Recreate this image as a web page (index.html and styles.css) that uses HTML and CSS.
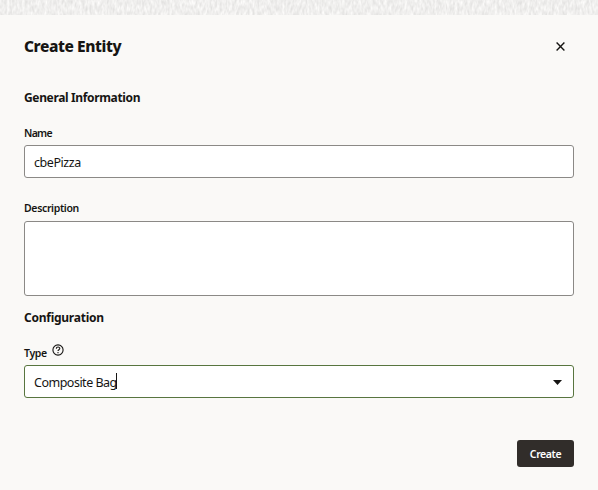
FILE: index.html
```html
<!DOCTYPE html>
<html lang="en">
<head>
<meta charset="utf-8">
<title>Create Entity</title>
<link rel="stylesheet" href="styles.css">
</head>
<body>
<svg class="texture" width="598" height="15" aria-hidden="true">
  <filter id="grain" x="0" y="0" width="100%" height="100%" color-interpolation-filters="sRGB">
    <feTurbulence type="fractalNoise" baseFrequency="0.4 0.17" numOctaves="2" seed="4"/>
    <feColorMatrix values="0.16 0 0 0 0.86  0.16 0 0 0 0.857  0.16 0 0 0 0.852  0 0 0 0 1"/>
  </filter>
  <rect width="598" height="15" filter="url(#grain)"/>
</svg>
<main class="drawer">
  <header class="header">
    <h1 class="title"><span>Create Entity</span></h1>
    <button class="close" aria-label="Close"><svg width="9" height="9" viewBox="0 0 9 9"><path d="M.6.6l7.8 7.8M8.4.6L.6 8.4" fill="none" stroke="#161513" stroke-width="1.4"/></svg></button>
  </header>
  <h2 class="section general">General Information</h2>
  <label class="label name-label" for="name">Name</label>
  <div class="field" id="name"><span class="name-value">cbePizza</span></div>
  <label class="label description-label" for="description">Description</label>
  <div class="field area" id="description"></div>
  <h2 class="section configuration">Configuration</h2>
  <div class="type-row">
    <label class="label type-label" for="type">Type</label>
    <svg class="help" width="12" height="12" viewBox="0 0 12 12"><circle cx="6" cy="6" r="5.1" fill="none" stroke="#161513" stroke-width="1.1"/><path d="M4.3 4.8c0-2.4 3.5-2.3 3.5-.3 0 1.2-1.8 1.2-1.8 2.5M6 8v1.2" fill="none" stroke="#161513" stroke-width="1.1"/></svg>
  </div>
  <div class="field select" id="type"><span class="type-value">Composite Bag</span><i class="caret"></i><svg class="arrow" width="9" height="5" viewBox="0 0 9 5"><path d="M0 0h9L4.5 5z" fill="#161513"/></svg></div>
  <footer class="footer"><button class="create">Create</button></footer>
</main>
</body>
</html>
```
FILE: styles.css
```css
* { box-sizing: border-box; }
body { margin: 0; height: 490px; overflow: hidden; background: #faf9f7; color: #161513; font-family: "Noto Sans", sans-serif; }
.texture { display: block; }
.drawer { padding: 0 24px; }
.header { display: flex; align-items: center; justify-content: space-between; height: 63px; }
.title { margin: 0; padding-bottom: 2px; font-size: 15.5px; line-height: 22px; font-weight: 800; letter-spacing: -.42px; }
.close { display: flex; width: 27px; height: 27px; align-items: center; justify-content: center; border: 0; padding: 0; background: none; }
.section { margin: 0; font-size: 12px; line-height: 20px; font-weight: 700; letter-spacing: -.35px; }
.general { margin-top: 10px; }
.label { display: block; font-size: 10.5px; line-height: 14px; font-weight: 600; letter-spacing: -.35px; }
.name-label { margin-top: 18px; letter-spacing: -.7px; }
.field { display: flex; align-items: center; height: 33px; margin-top: 5px; padding: 2px 9px 0; border: 1px solid #8b8986; border-radius: 3px; background: #fff; font-size: 12.5px; line-height: 18px; letter-spacing: -.45px; }
.description-label { margin-top: 23px; }
.area { height: 75px; margin-top: 6px; }
.configuration { margin-top: 12px; letter-spacing: -.25px; }
.type-row { display: flex; align-items: flex-end; height: 32px; }
.help { margin: 0 0 4px 5px; }
.select { border-color: #58753f; letter-spacing: -.5px; }
.caret { width: 1px; height: 16px; margin: -3px 0 0 -1px; background: #161513; }
.arrow { margin: -1px 2px 0 auto; }
.footer { display: flex; justify-content: flex-end; margin-top: 42px; }
.create { width: 57px; height: 27px; padding: 1px 0 0; border: 0; border-radius: 3px; background: #312d2a; color: #fff; font: 600 10.5px/16px "Noto Sans", sans-serif; letter-spacing: -.4px; }
```
